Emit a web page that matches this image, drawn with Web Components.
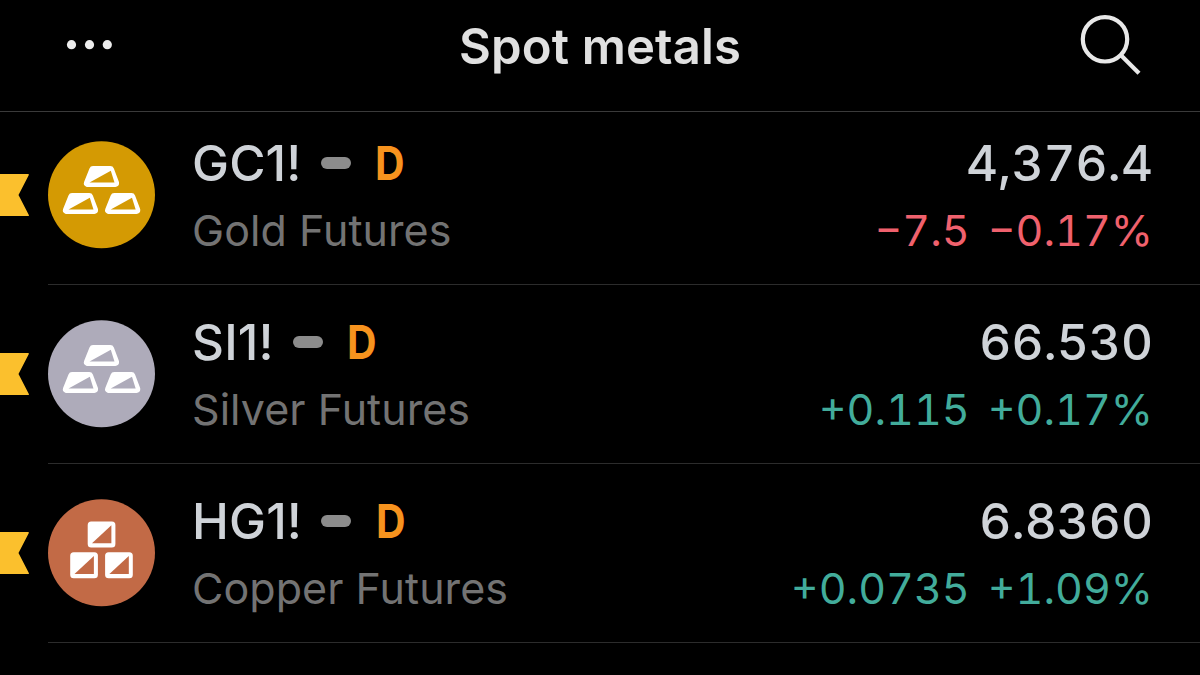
<!DOCTYPE html>
<html lang="en">
<head>
<meta charset="utf-8">
<title>Spot metals</title>
<style>
    body {
        margin: 0;
        width: 1200px;
        height: 675px;
        overflow: hidden;
        background: #000;
        font-family: Inter, "Liberation Sans", sans-serif;
    }
</style>
</head>
<body>
<watch-list>
    <list-header slot="header">Spot metals</list-header>
    <symbol-row symbol="GC1!" price="4,376.4" change="−7.5" percent="−0.17%" color="#d49a03" icon="bars">Gold Futures</symbol-row>
    <symbol-row symbol="SI1!" price="66.530" change="+0.115" percent="+0.17%" color="#aeabba" icon="bars">Silver Futures</symbol-row>
    <symbol-row symbol="HG1!" price="6.8360" change="+0.0735" percent="+1.09%" color="#c26a46" icon="cubes">Copper Futures</symbol-row>
</watch-list>

<script>
class WatchList extends HTMLElement {
    connectedCallback() {
        this.attachShadow({ mode: 'open' });
        this.shadowRoot.innerHTML = `
            <style>
                :host {
                    display: block;
                }

                /* the first row is scrolled slightly under the header */
                .rows {
                    display: flex;
                    flex-direction: column;
                    margin-top: -6px;
                }
            </style>
            <slot name="header"></slot>
            <div class="rows"><slot></slot></div>
        `;
    }
}

class ListHeader extends HTMLElement {
    connectedCallback() {
        this.attachShadow({ mode: 'open' });
        this.shadowRoot.innerHTML = `
            <style>
                :host {
                    display: grid;
                    grid-template-columns: 1fr auto 1fr;
                    box-sizing: border-box;
                    height: 112px;
                    padding: 0 58px 0 64px;
                    border-bottom: 1px solid #3a3a3a;
                    color: #e0e0e0;
                }

                h1 {
                    margin: 0;
                    padding: 17px 0 0;
                    font-size: 49px;
                    line-height: 60px;
                    font-weight: 570;
                    letter-spacing: 0.15px;
                    white-space: nowrap;
                    transform: translateX(-3px);
                }

                svg {
                    display: block;
                }

                .search {
                    justify-self: end;
                }
            </style>
            <svg width="52" height="90" viewBox="0 0 52 90" fill="#ededed">
                <circle cx="7.5" cy="44.7" r="4.6"/>
                <circle cx="25.5" cy="44.7" r="4.6"/>
                <circle cx="43.3" cy="44.7" r="4.6"/>
            </svg>
            <h1><slot></slot></h1>
            <svg class="search" width="64" height="90" viewBox="0 0 64 90" fill="none" stroke="#e8e8e8" stroke-width="4.2">
                <circle cx="27" cy="39.3" r="22.2"/>
                <path d="M42.7 55 61 73.2"/>
            </svg>
        `;
    }
}

class MetalIcon extends HTMLElement {
    connectedCallback() {
        const cubes = this.getAttribute('kind') === 'cubes';
        const color = this.getAttribute('color');

        const bar = `
            <path d="M39.7 42.1H67.3L62.3 28.9H45Z" fill="#fff" stroke="#fff" stroke-width="7.6" stroke-linejoin="round"/>
            <path d="M41.5 41.4 62.8 29.7 66.5 41.4Z" fill="${color}"/>
        `;
        const cube = `
            <rect x="39.7" y="22.5" width="27.7" height="26" rx="3.5" fill="#fff"/>
            <path d="M44 44.3 63.4 26.3V44.3Z" fill="${color}"/>
        `;
        const shape = cubes ? cube : bar;
        const offsets = cubes ? [[0, 0], [-17.5, 30.7], [17.4, 30.7]] : [[0, 0], [-21, 27], [21.2, 27]];

        this.attachShadow({ mode: 'open' });
        this.shadowRoot.innerHTML = `
            <style>
                :host {
                    display: block;
                    width: 107px;
                    height: 108px;
                }

                svg {
                    display: block;
                }
            </style>
            <svg width="107" height="108" viewBox="0 0 107 108">
                <circle cx="53.5" cy="53.8" r="53.5" fill="${color}"/>
                ${offsets.map(([x, y]) => `<g transform="translate(${x} ${y})">${shape}</g>`).join('')}
            </svg>
        `;
    }
}

class SymbolRow extends HTMLElement {
    connectedCallback() {
        const get = (name) => this.getAttribute(name);
        const trend = get('change').startsWith('+') ? 'up' : 'down';

        this.attachShadow({ mode: 'open' });
        this.shadowRoot.innerHTML = `
            <style>
                :host {
                    display: grid;
                    grid-template-columns: 48px 1fr;
                    height: 179px;
                }

                .flag {
                    align-self: center;
                    display: block;
                    margin-bottom: 1px;
                }

                .body {
                    display: flex;
                    align-items: center;
                    box-sizing: border-box;
                    padding-right: 47px;
                    border-bottom: 1px solid #2c2c2c;
                }

                .info {
                    flex: 1;
                    padding-left: 37px;
                }

                .info, .quote {
                    padding-top: 2px;
                }

                .line {
                    display: flex;
                    align-items: center;
                    height: 67px;
                    white-space: nowrap;
                }

                .symbol, .price {
                    font-size: 49.5px;
                    font-weight: 450;
                    color: #cfd3d8;
                }

                .symbol {
                    letter-spacing: 0.15px;
                }

                .dash {
                    width: 30px;
                    height: 12px;
                    margin-left: 19px;
                    border-radius: 6px;
                    background: #8c8c8c;
                }

                .delay {
                    margin-left: 24.5px;
                    font-size: 46.5px;
                    font-weight: 700;
                    color: #f7931e;
                    transform: scaleX(0.88);
                    transform-origin: left;
                }

                .name, .change {
                    font-size: 43px;
                    font-weight: 400;
                }

                .name {
                    color: #737373;
                    letter-spacing: 0.05px;
                }

                .quote {
                    font-feature-settings: "tnum";
                }

                .quote .line {
                    justify-content: flex-end;
                }

                .change {
                    gap: 18px;
                }

                .up {
                    color: #42ac9b;
                }

                .down {
                    color: #f0616d;
                }
            </style>
            <svg class="flag" width="29" height="42" viewBox="0 0 29 42">
                <path d="M0 0H28Q29.4 0 28.7 1.2L18.5 21 28.7 40.8Q29.4 42 28 42H0Z" fill="#fbc02d"/>
            </svg>
            <div class="body">
                <metal-icon kind="${get('icon')}" color="${get('color')}"></metal-icon>
                <div class="info">
                    <div class="line">
                        <span class="symbol">${get('symbol')}</span>
                        <span class="dash"></span>
                        <span class="delay">D</span>
                    </div>
                    <div class="line name"><slot></slot></div>
                </div>
                <div class="quote">
                    <div class="line price">${get('price')}</div>
                    <div class="line change ${trend}">
                        <span>${get('change')}</span>
                        <span>${get('percent')}</span>
                    </div>
                </div>
            </div>
        `;
    }
}

customElements.define('watch-list', WatchList);
customElements.define('list-header', ListHeader);
customElements.define('metal-icon', MetalIcon);
customElements.define('symbol-row', SymbolRow);
</script>
</body>
</html>
